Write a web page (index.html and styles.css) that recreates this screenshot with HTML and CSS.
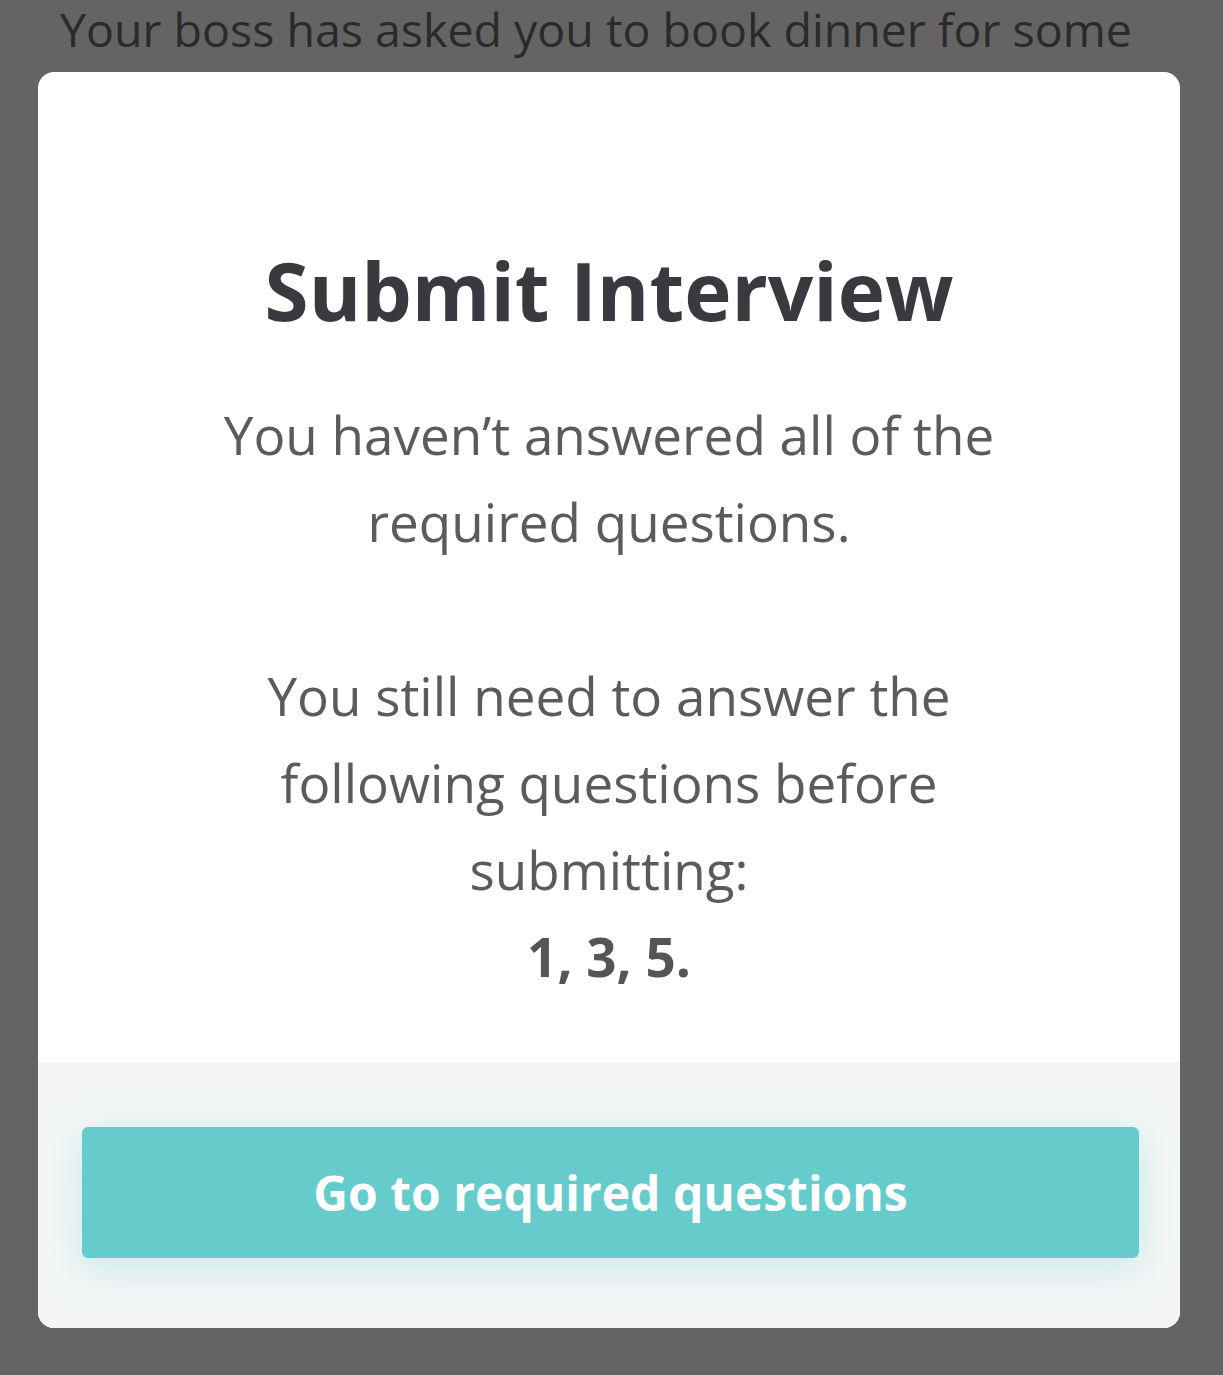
FILE: index.html
```html
<!DOCTYPE html>
<html lang="en">
<head>
<meta charset="utf-8">
<title>Submit Interview</title>
<link rel="stylesheet" href="styles.css">
</head>
<body>
<p class="bg-text">Your boss has asked you to book dinner for some</p>
<div class="modal">
  <div class="modal-body">
    <h1 class="modal-title">Submit Interview</h1>
    <p class="modal-text">You haven’t answered all of the required questions.</p>
    <p class="modal-text">You still need to answer the following questions before submitting:<br><strong>1, 3, 5.</strong></p>
  </div>
  <div class="modal-footer">
    <button class="btn-primary" type="button">Go to required questions</button>
  </div>
</div>
</body>
</html>
```

FILE: styles.css
```css
html, body {
  margin: 0;
  padding: 0;
  background: #646464;
  font-family: "Open Sans", "Noto Sans", Arial, sans-serif;
  height: 100%;
  overflow: hidden;
}

.bg-text {
  box-sizing: border-box;
  margin: 0 0 0 60px;
  padding-top: 0;
  font-size: 46.5px;
  line-height: 58px;
  color: #2a2a2a;
  white-space: nowrap;
  height: 72px;
}

.modal {
  margin-left: 38px;
  width: 1142px;
  height: 1256px;
  background: #ffffff;
  border-radius: 16px;
  overflow: hidden;
  display: flex;
  flex-direction: column;
}

.modal-body {
  flex: 1;
  display: flex;
  flex-direction: column;
  align-items: center;
  padding: 163px 100px 0;
  text-align: center;
}

.modal-title {
  margin: 0;
  font-size: 80px;
  line-height: 110px;
  font-weight: 700;
  color: #393a40;
}

.modal-text {
  margin: 46px 0 0;
  font-size: 53px;
  line-height: 87px;
  color: #5b5b5b;
  max-width: 820px;
}

.modal-text + .modal-text {
  margin-top: 87px;
}

.modal-text strong {
  font-weight: 700;
  color: #555555;
}

.modal-footer {
  height: 266px;
  box-sizing: border-box;
  background: #f4f6f6;
  padding: 65px 41px 0 44px;
}

.btn-primary {
  display: block;
  width: 100%;
  height: 131px;
  padding: 0;
  border: none;
  border-radius: 6px;
  background: #66cccb;
  color: #ffffff;
  font-family: "Open Sans", "Noto Sans", Arial, sans-serif;
  font-size: 48px;
  font-weight: 700;
  box-shadow: 0 10px 40px rgba(102, 204, 203, 0.32);
  cursor: pointer;
}
```
